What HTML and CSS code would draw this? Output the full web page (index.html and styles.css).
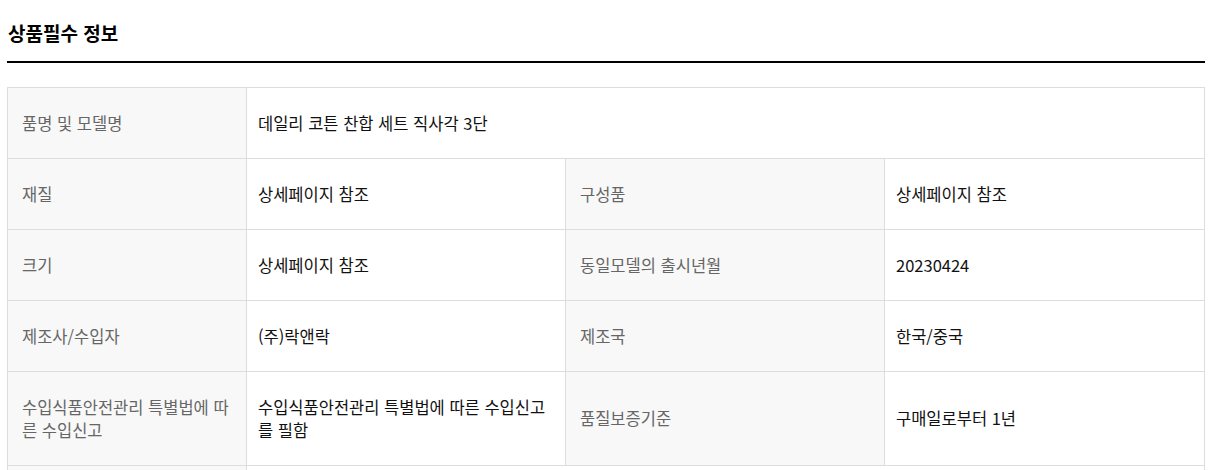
FILE: index.html
```html
<!DOCTYPE html>
<html lang="ko">
<head>
<meta charset="utf-8">
<title>상품필수 정보</title>
<link rel="stylesheet" href="styles.css">
</head>
<body>
<section class="info">
  <h2 class="info-title">상품필수 정보</h2>
  <table class="info-table">
    <colgroup>
      <col class="c1"><col class="c2"><col class="c3"><col class="c4">
    </colgroup>
    <tbody>
      <tr>
        <th>품명 및 모델명</th>
        <td colspan="3">데일리 코튼 찬합 세트 직사각 3단</td>
      </tr>
      <tr>
        <th>재질</th>
        <td>상세페이지 참조</td>
        <th>구성품</th>
        <td>상세페이지 참조</td>
      </tr>
      <tr>
        <th>크기</th>
        <td>상세페이지 참조</td>
        <th>동일모델의 출시년월</th>
        <td>20230424</td>
      </tr>
      <tr>
        <th>제조사/수입자</th>
        <td>(주)락앤락</td>
        <th>제조국</th>
        <td>한국/중국</td>
      </tr>
      <tr>
        <th>수입식품안전관리 특별법에 따른 수입신고</th>
        <td>수입식품안전관리 특별법에 따른 수입신고를 필함</td>
        <th>품질보증기준</th>
        <td>구매일로부터 1년</td>
      </tr>
      <tr>
        <th>A/S 책임자와 전화번호</th>
        <td colspan="3">락앤락 고객센터 1588-1488</td>
      </tr>
    </tbody>
  </table>
</section>
</body>
</html>
```

FILE: styles.css
```css
html, body {
  margin: 0;
  padding: 0;
  background: #fff;
}
body {
  font-family: "Noto Sans CJK KR", "Noto Sans", sans-serif;
  color: #111;
}
.info {
  padding: 0 7px;
}
.info-title {
  margin: 0;
  padding: 19px 0 14px 1px;
  font-size: 19px;
  line-height: 28px;
  font-weight: 700;
  color: #000;
  border-bottom: 2px solid #000;
}
.info-table {
  width: 100%;
  margin-top: 24px;
  border-collapse: collapse;
  table-layout: fixed;
  border-top: 1px solid #ddd;
}
.c1 { width: 239px; }
.c2 { width: 319px; }
.c3 { width: 319px; }
.info-table th,
.info-table td {
  border: 1px solid #ddd;
  padding: 23.5px 14px;
  font-size: 16.5px;
  line-height: 23px;
  text-align: left;
  vertical-align: middle;
}
.info-table th {
  background: #f8f8f8;
  color: #666;
  font-weight: 400;
}
.info-table td {
  background: #fff;
  color: #111;
  font-weight: 400;
  padding-left: 11px;
  padding-right: 11px;
}
```
